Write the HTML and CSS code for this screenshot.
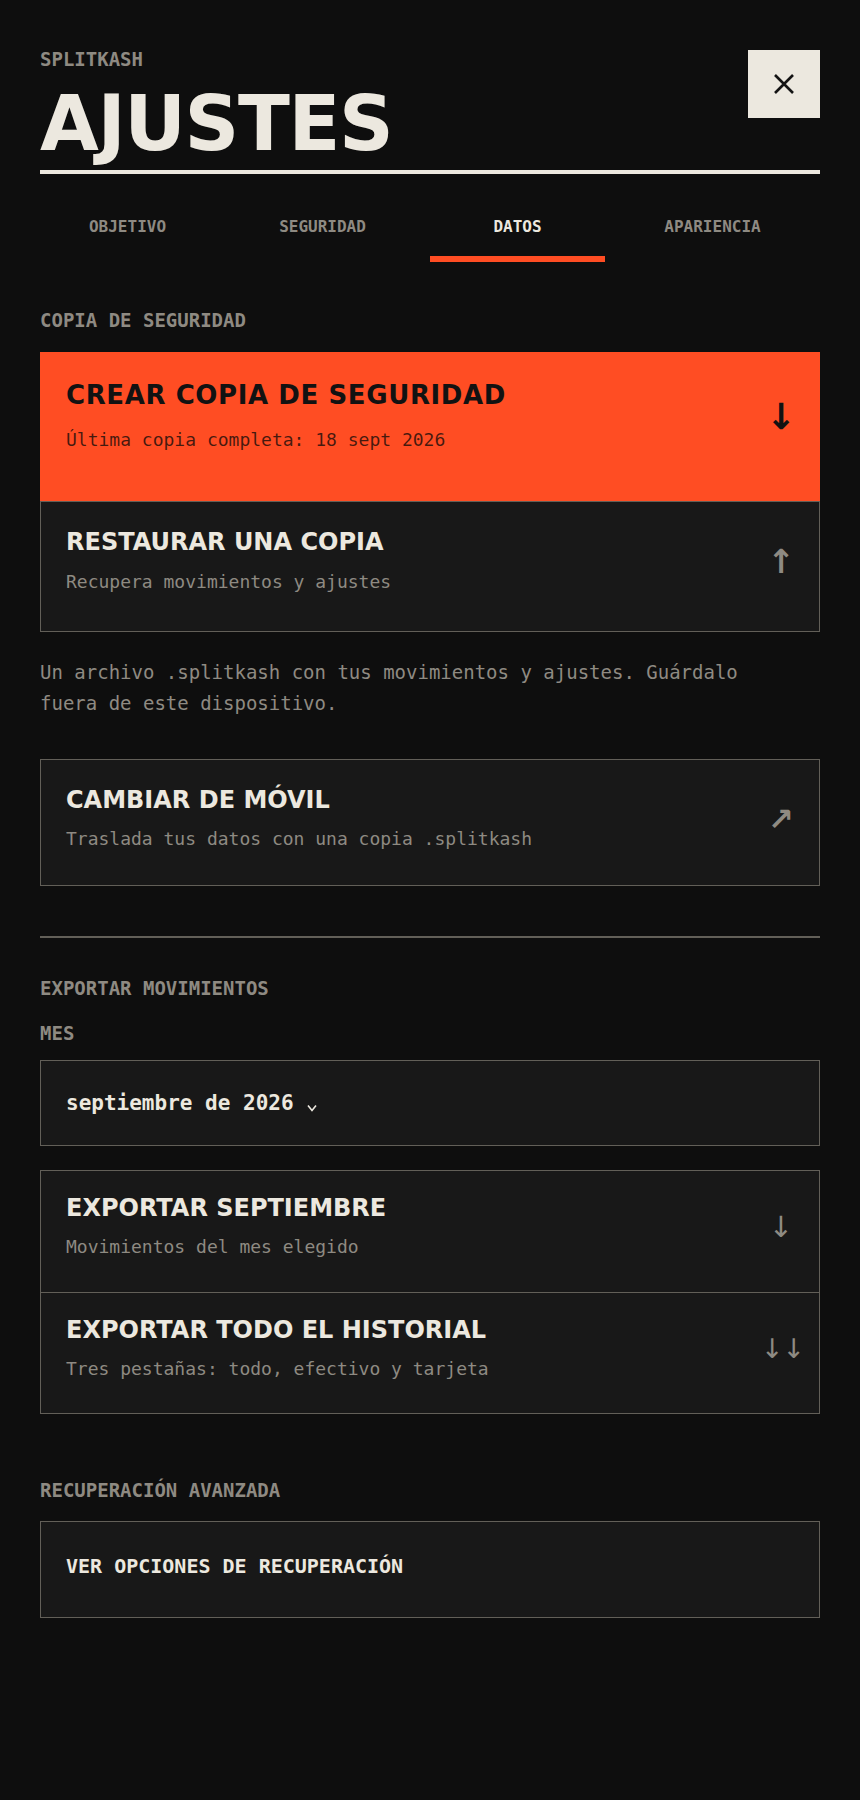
FILE: index.html
```html
<!DOCTYPE html>
<html lang="es">
<head>
<meta charset="utf-8">
<title>Ajustes · Splitkash</title>
<link rel="stylesheet" href="styles.css">
</head>
<body>
<div class="page">
  <header class="header">
    <div class="head-text">
      <div class="brand">SPLITKASH</div>
      <h1 class="title">AJUSTES</h1>
    </div>
    <div class="close" role="button" aria-label="Cerrar">
      <svg width="22" height="22" viewBox="0 0 22 22"><path d="M2 2 L20 20 M20 2 L2 20" stroke="#141414" stroke-width="2.6" fill="none"/></svg>
    </div>
  </header>

  <nav class="tabs">
    <div class="tab">OBJETIVO</div>
    <div class="tab">SEGURIDAD</div>
    <div class="tab active">DATOS</div>
    <div class="tab">APARIENCIA</div>
  </nav>

  <section class="section-backup">
    <h2 class="label">COPIA DE SEGURIDAD</h2>
    <div class="action action-primary">
      <div class="action-text">
        <div class="action-title">CREAR COPIA DE SEGURIDAD</div>
        <div class="action-sub">Última copia completa: 18 sept 2026</div>
      </div>
      <span class="action-icon icon-primary">↓</span>
    </div>
    <div class="action action-restore">
      <div class="action-text">
        <div class="action-title">RESTAURAR UNA COPIA</div>
        <div class="action-sub">Recupera movimientos y ajustes</div>
      </div>
      <span class="action-icon icon-up">↑</span>
    </div>
    <p class="note">Un archivo .splitkash con tus movimientos y ajustes. Guárdalo fuera de este dispositivo.</p>
    <div class="action action-move">
      <div class="action-text">
        <div class="action-title">CAMBIAR DE MÓVIL</div>
        <div class="action-sub">Traslada tus datos con una copia .splitkash</div>
      </div>
      <span class="action-icon icon-out">↗</span>
    </div>
  </section>

  <hr class="divider">

  <section class="section-export">
    <h2 class="label">EXPORTAR MOVIMIENTOS</h2>
    <div class="label label-field">MES</div>
    <div class="select">
      <span class="select-value">septiembre de 2026</span>
      <svg class="chevron" width="10" height="8" viewBox="0 0 10 8"><polyline points="1,1.5 5,6.5 9,1.5" stroke="#ece8df" stroke-width="1.6" fill="none"/></svg>
    </div>
    <div class="group">
      <div class="action action-item">
        <div class="action-text">
          <div class="action-title">EXPORTAR SEPTIEMBRE</div>
          <div class="action-sub">Movimientos del mes elegido</div>
        </div>
        <span class="action-icon icon-down">↓</span>
      </div>
      <div class="action action-item">
        <div class="action-text">
          <div class="action-title">EXPORTAR TODO EL HISTORIAL</div>
          <div class="action-sub">Tres pestañas: todo, efectivo y tarjeta</div>
        </div>
        <span class="action-icon icon-double">↓↓</span>
      </div>
    </div>
  </section>

  <section class="section-recovery">
    <h2 class="label">RECUPERACIÓN AVANZADA</h2>
    <div class="link-box">VER OPCIONES DE RECUPERACIÓN</div>
  </section>
</div>
</body>
</html>
```

FILE: styles.css
```css
* {
  box-sizing: border-box;
  margin: 0;
  padding: 0;
}

html, body {
  background: #0e0e0e;
}

body {
  font-family: "DejaVu Sans Mono", "Liberation Mono", monospace;
  color: #ece8df;
}

.page {
  padding: 0 40px 120px;
}

/* Header */
.header {
  display: flex;
  justify-content: space-between;
  align-items: flex-start;
  padding-top: 47px;
  padding-bottom: 8px;
  border-bottom: 4px solid #ece8df;
}

.brand {
  font-size: 19px;
  line-height: 24px;
  font-weight: bold;
  color: #8e8a82;
}

.title {
  font-family: "DejaVu Sans", sans-serif;
  font-size: 76px;
  line-height: 76px;
  font-weight: bold;
  letter-spacing: -1.4px;
  margin-top: 15px;
  color: #ece8df;
}

.close {
  width: 72px;
  height: 68px;
  margin-top: 3px;
  background: #ece8df;
  display: flex;
  align-items: center;
  justify-content: center;
}

/* Tabs */
.tabs {
  display: grid;
  grid-template-columns: repeat(4, 1fr);
  column-gap: 20px;
  margin-right: 20px;
  margin-top: 24px;
}

.tab {
  text-align: center;
  font-size: 16px;
  line-height: 20px;
  font-weight: bold;
  color: #8e8a82;
  padding: 19px 0;
  border-bottom: 6px solid transparent;
}

.tab.active {
  color: #ece8df;
  border-bottom-color: #ff4d23;
}

/* Labels */
.label {
  font-size: 19px;
  line-height: 24px;
  font-weight: bold;
  color: #8e8a82;
}

.section-backup .label {
  margin-top: 46px;
  margin-bottom: 20px;
}

/* Action cards */
.action {
  display: flex;
  align-items: center;
  background: #181818;
  border: 1px solid #625f58;
  padding: 25px 18px 33px 25px;
}

.action-text {
  flex: 1;
  min-width: 0;
}

.action-title {
  font-family: "DejaVu Sans", sans-serif;
  font-weight: bold;
  font-size: 24px;
  line-height: 29px;
  color: #ece8df;
}

.action-sub {
  margin-top: 10px;
  font-size: 18px;
  line-height: 27px;
  color: #8e8a82;
}

.action-icon {
  flex: 0 0 40px;
  width: 40px;
  text-align: center;
  font-family: "DejaVu Sans", sans-serif;
  line-height: 1;
  color: #8e8a82;
}

.action-primary {
  background: #ff4d23;
  border-color: #ff4d23;
  padding: 27px 18px 47px 25px;
}

.action-primary .action-title {
  font-size: 26px;
  line-height: 31px;
  letter-spacing: 0.6px;
  color: #121212;
}

.action-primary .action-sub {
  margin-top: 15px;
  color: rgba(18, 12, 10, 0.78);
}

.icon-primary {
  font-size: 36px;
  font-weight: bold;
  color: #121212;
}

.action-restore {
  padding-top: 26px;
  padding-bottom: 36px;
}

.action-restore .action-sub {
  margin-top: 11px;
}

.icon-up {
  font-size: 33px;
  font-weight: bold;
}

.note {
  margin-top: 25px;
  max-width: 720px;
  font-size: 19px;
  line-height: 31px;
  color: #8e8a82;
}

.action-move {
  margin-top: 40px;
  padding-top: 26px;
}

.icon-out {
  font-size: 31px;
  font-weight: bold;
}

.divider {
  border: 0;
  border-top: 2px solid #625f58;
  margin-top: 50px;
}

/* Export */
.section-export > .label:first-child {
  margin-top: 38px;
}

.label-field {
  margin-top: 21px;
  margin-bottom: 15px;
}

.select {
  display: flex;
  align-items: center;
  background: #181818;
  border: 1px solid #625f58;
  padding: 29px 25px;
}

.select-value {
  font-size: 21px;
  line-height: 26px;
  font-weight: bold;
  color: #ece8df;
}

.chevron {
  margin-left: 13px;
  margin-top: 10px;
}

.group {
  margin-top: 24px;
  border: 1px solid #625f58;
  background: #181818;
}

.group .action-item {
  border: 0;
  padding: 23px 18px 31.5px 25px;
}

.group .action-item + .action-item {
  border-top: 1px solid #625f58;
}

.icon-down {
  font-size: 29px;
}

.icon-double {
  font-size: 27px;
  letter-spacing: -1px;
}

/* Recovery */
.section-recovery .label {
  margin-top: 64px;
  margin-bottom: 19px;
}

.link-box {
  background: #181818;
  border: 1px solid #625f58;
  padding: 32px 25px 39px;
  font-size: 20px;
  line-height: 24px;
  font-weight: bold;
  color: #ece8df;
}
```
